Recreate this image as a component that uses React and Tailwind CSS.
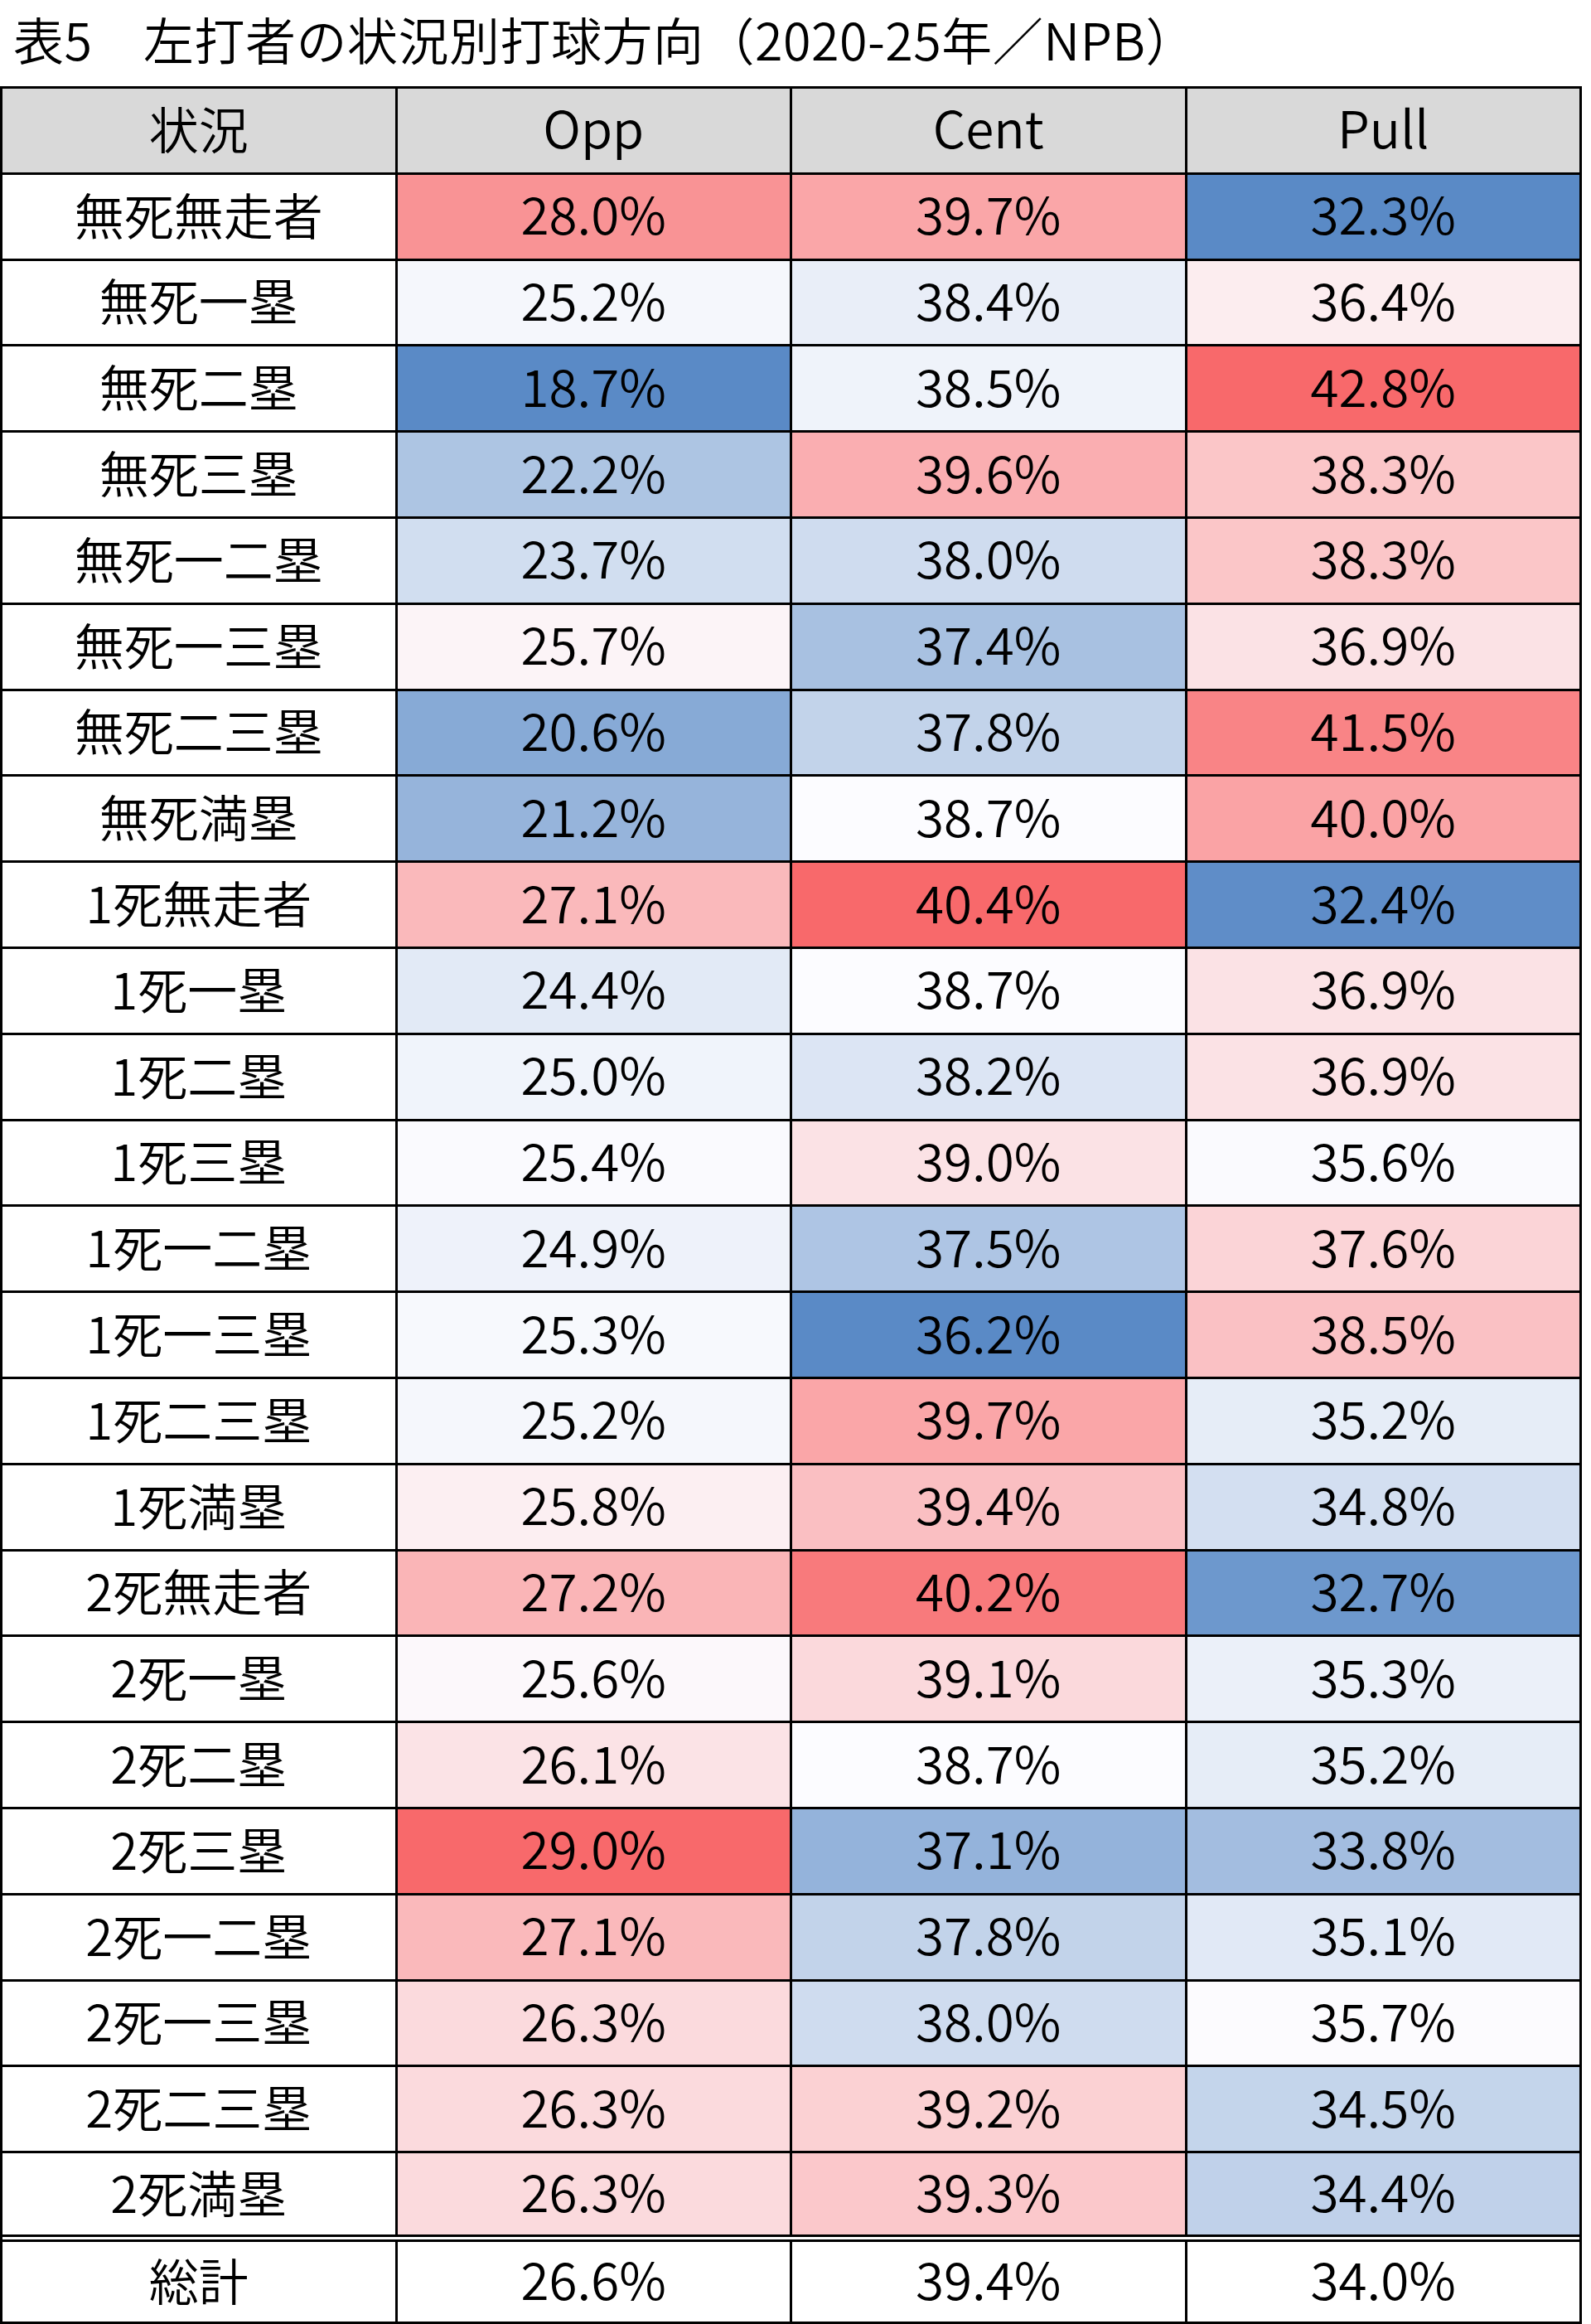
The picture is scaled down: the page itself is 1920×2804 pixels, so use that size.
import React from 'react';

// 状況, Opp, Cent, Pull
const rows = [
  ['無死無走者', 28.0, 39.7, 32.3],
  ['無死一塁', 25.2, 38.4, 36.4],
  ['無死二塁', 18.7, 38.5, 42.8],
  ['無死三塁', 22.2, 39.6, 38.3],
  ['無死一二塁', 23.7, 38.0, 38.3],
  ['無死一三塁', 25.7, 37.4, 36.9],
  ['無死二三塁', 20.6, 37.8, 41.5],
  ['無死満塁', 21.2, 38.7, 40.0],
  ['1死無走者', 27.1, 40.4, 32.4],
  ['1死一塁', 24.4, 38.7, 36.9],
  ['1死二塁', 25.0, 38.2, 36.9],
  ['1死三塁', 25.4, 39.0, 35.6],
  ['1死一二塁', 24.9, 37.5, 37.6],
  ['1死一三塁', 25.3, 36.2, 38.5],
  ['1死二三塁', 25.2, 39.7, 35.2],
  ['1死満塁', 25.8, 39.4, 34.8],
  ['2死無走者', 27.2, 40.2, 32.7],
  ['2死一塁', 25.6, 39.1, 35.3],
  ['2死二塁', 26.1, 38.7, 35.2],
  ['2死三塁', 29.0, 37.1, 33.8],
  ['2死一二塁', 27.1, 37.8, 35.1],
  ['2死一三塁', 26.3, 38.0, 35.7],
  ['2死二三塁', 26.3, 39.2, 34.5],
  ['2死満塁', 26.3, 39.3, 34.4],
];

const total = ['総計', 26.6, 39.4, 34.0];

// blue - white - red scale, midpoint at the median of each column
const LO = [90, 138, 198];
const MID = [252, 252, 255];
const HI = [248, 105, 107];

const stats = [1, 2, 3].map((c) => {
  const vals = rows.map((r) => r[c]).sort((a, b) => a - b);
  const n = vals.length;
  const med = n % 2 ? vals[(n - 1) / 2] : (vals[n / 2 - 1] + vals[n / 2]) / 2;
  return { min: vals[0], mid: med, max: vals[n - 1] };
});

const mix = (a, b, t) => a.map((v, i) => Math.round(v + (b[i] - v) * t));

const cellColor = (v, col) => {
  const { min, mid, max } = stats[col];
  const rgb = v <= mid ? mix(LO, MID, (v - min) / (mid - min)) : mix(MID, HI, (v - mid) / (max - mid));
  return `rgb(${rgb[0]}, ${rgb[1]}, ${rgb[2]})`;
};

const Cell = ({ children, className = 'bg-white', num = false, style }) => (
  <div
    className={`flex items-center justify-center leading-none font-[350] ${
      num ? 'text-[62px] pb-[10px]' : 'text-[60px] pb-[7px]'
    } ${className}`}
    style={style}
  >
    {children}
  </div>
);

export default function App() {
  return (
    <div className="w-[1920px] min-h-[2804px] bg-white text-black font-['Noto_Sans_CJK_JP',sans-serif]">
      <h1 className="h-[104px] pl-[16px] pt-[5px] text-[61px] leading-[84px] font-[350] tracking-[0.5px]">
        表5　左打者の状況別打球方向（2020-25年／NPB）
      </h1>

      <div className="w-[1909px] border-x-[3px] border-black">
        <div className="grid grid-cols-4 grid-rows-[repeat(24,100.8px)_98px] gap-[3px] bg-black py-[3px]">
          <Cell className="bg-[#d9d9d9]">状況</Cell>
          <Cell className="bg-[#d9d9d9]" num>Opp</Cell>
          <Cell className="bg-[#d9d9d9]" num>Cent</Cell>
          <Cell className="bg-[#d9d9d9]" num>Pull</Cell>

          {rows.map((r) => (
            <React.Fragment key={r[0]}>
              <Cell>{r[0]}</Cell>
              {[1, 2, 3].map((c) => (
                <Cell key={c} className="" num style={{ backgroundColor: cellColor(r[c], c - 1) }}>
                  {r[c].toFixed(1)}%
                </Cell>
              ))}
            </React.Fragment>
          ))}
        </div>

        <div className="h-[3px] bg-white" />

        <div className="grid grid-cols-4 grid-rows-[96px] gap-x-[3px] bg-black py-[3px]">
          {total.map((v, i) => (
            <Cell key={i} num={i > 0}>
              {i === 0 ? v : `${v.toFixed(1)}%`}
            </Cell>
          ))}
        </div>
      </div>
    </div>
  );
}
